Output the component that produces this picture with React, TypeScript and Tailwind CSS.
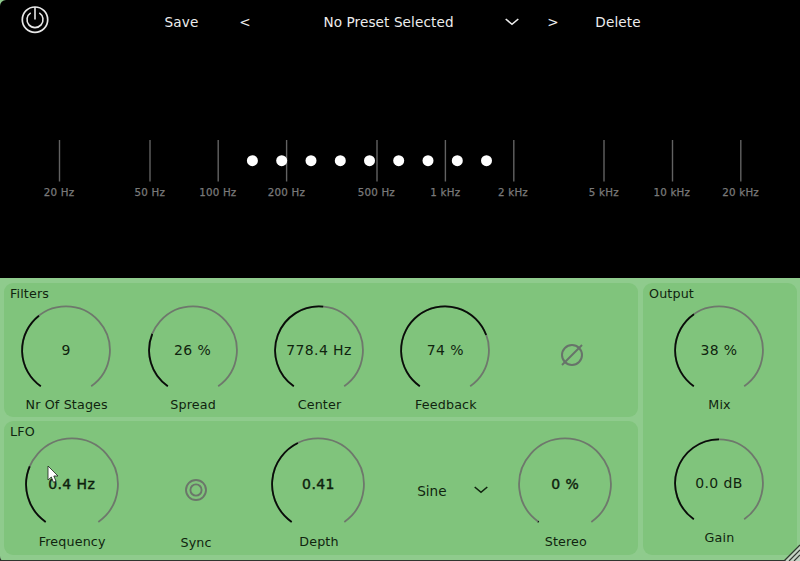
import React from "react";

const MARKS: [number, string, number][] = [
  [59.5, "20 Hz", 59],
  [150, "50 Hz", 149.8],
  [218.2, "100 Hz", 217.8],
  [286.6, "200 Hz", 286.5],
  [377, "500 Hz", 376.3],
  [445.4, "1 kHz", 445.3],
  [513.8, "2 kHz", 513],
  [604, "5 kHz", 603.8],
  [672.5, "10 kHz", 671.8],
  [740.8, "20 kHz", 740.6],
];

const STAGES = [252.4, 281.7, 311, 340.3, 369.5, 398.7, 428, 457.3, 486.5];

function point(c: number, r: number, deg: number) {
  const a = (deg * Math.PI) / 180;
  return `${(c + r * Math.sin(a)).toFixed(2)} ${(c - r * Math.cos(a)).toFixed(2)}`;
}

function arc(c: number, r: number, from: number, to: number) {
  return `M${point(c, r, from)}A${r} ${r} 0 ${to - from > 180 ? 1 : 0} 1 ${point(c, r, to)}`;
}

type KnobProps = {
  size: number;
  angle: number;
  value: string;
  label: string;
  strong?: boolean;
  labelClass?: string;
};

function Knob({ size, angle, value, label, strong, labelClass = "mt-px" }: KnobProps) {
  const c = size / 2;
  const radius = c - 2.1;
  return (
    <div className="flex w-full flex-col items-center">
      <div className="grid place-items-center">
        <svg className="col-start-1 row-start-1" width={size} height={size} fill="none" strokeWidth="1.8">
          <g transform="translate(0 0.3)">
            <path d={arc(c, radius, -145, 145)} stroke="#6e786c" />
            <path d={arc(c, radius, -145, angle)} stroke="#070f07" />
          </g>
        </svg>
        <span
          className={`col-start-1 row-start-1 text-[14px] leading-4 tracking-[0.4px] whitespace-nowrap ${
            strong ? "[-webkit-text-stroke:0.4px_#0b1c0b]" : ""
          }`}
        >
          {value}
        </span>
      </div>
      <span className={`pl-px text-[12.7px] leading-4 tracking-[0.15px] whitespace-nowrap ${labelClass}`}>{label}</span>
    </div>
  );
}

function Chevron({ className }: { className: string }) {
  return (
    <svg className={className} width="14" height="8" fill="none" stroke="currentColor" strokeWidth="1.6">
      <path d="M0.7 1L7 6.3L13.3 1" />
    </svg>
  );
}

function Title({ children }: { children: string }) {
  return <h2 className="h-[18px] pt-[3px] pl-[6px] text-[12.7px] leading-4 tracking-[0.15px]">{children}</h2>;
}

export default function App() {
  return (
    <div className="relative flex h-[561px] w-[800px] flex-col overflow-hidden bg-[#8fcb8d] font-['DejaVu_Sans',Verdana,sans-serif] text-[#10240f]">
      <header className="h-[278px] shrink-0 rounded-tl-[6px] bg-black text-[#ededed]">
        <div className="flex h-[44px] items-center text-[13.6px] tracking-[0.1px]">
          <svg className="-mt-[5px] ml-[21px]" width="28" height="28" fill="none" stroke="#e8e8e8">
            <circle cx="14" cy="13.7" r="12.7" strokeWidth="1.7" />
            <path d="M9.7 6.9A8 8 0 1 0 18.3 6.9" strokeWidth="1.6" />
            <path d="M14 1V13.5" strokeWidth="1.6" />
          </svg>
          <span className="ml-[101px] w-[63px] text-center">Save</span>
          <span className="ml-[22px] w-5 text-center">&lt;</span>
          <span className="ml-[63px] w-[141px] text-center whitespace-nowrap">No Preset Selected</span>
          <Chevron className="ml-[46px]" />
          <span className="ml-[24px] w-5 text-center">&gt;</span>
          <span className="ml-[24px] w-[62px] text-center">Delete</span>
        </div>
        <svg width="800" height="234" viewBox="0 44 800 234">
          {MARKS.map(([x, text, tx]) => (
            <g key={text}>
              <path d={`M${x} 140V181.5`} stroke="#626262" strokeWidth="1.4" />
              <text
                x={tx}
                y="196.4"
                textAnchor="middle"
                fontSize="10.3"
                letterSpacing="0.2"
                fill="#7a7a7a"
                stroke="#7a7a7a"
                strokeWidth="0.25"
              >
                {text}
              </text>
            </g>
          ))}
          {STAGES.map((x) => (
            <circle key={x} cx={x} cy="160.7" r="5.5" fill="#fff" />
          ))}
        </svg>
      </header>

      <main className="flex gap-[5px] pt-[5px] pl-1">
        <div className="flex w-[634px] flex-col gap-1">
          <section className="h-[134px] rounded-[9px] bg-[#80c47c]">
            <Title>Filters</Title>
            <div className="mt-[3px] -ml-px grid w-[632px] grid-cols-5">
              <Knob size={92} angle={-38} value="9" label="Nr Of Stages" />
              <Knob size={92} angle={-68} value="26 %" label="Spread" />
              <Knob size={92} angle={5.5} value="778.4 Hz" label="Center" />
              <Knob size={92} angle={69.6} value="74 %" label="Feedback" />
              <div className="flex justify-center pt-[39px]">
                <svg width="24" height="24" fill="none" stroke="#67736a" strokeWidth="2">
                  <circle cx="12" cy="12" r="10" />
                  <path d="M2 22L22 2" />
                </svg>
              </div>
            </div>
          </section>

          <section className="h-[134px] rounded-[9px] bg-[#80c47c]">
            <Title>LFO</Title>
            <div className="-mt-[3px] ml-[6px] grid w-[617px] grid-cols-5">
              <Knob size={96} angle={-67} value="0.4 Hz" label="Frequency" strong labelClass="mt-[2px]" />
              <div className="flex flex-col items-center pt-[42px] pl-[2px]">
                <svg width="24" height="24" fill="none" stroke="#6b766a" strokeWidth="1.9">
                  <circle cx="12" cy="12" r="10" />
                  <circle cx="12" cy="12" r="5.6" />
                </svg>
                <span className="mt-[33px] text-[12.7px] leading-4 tracking-[0.15px]">Sync</span>
              </div>
              <Knob size={96} angle={-26} value="0.41" label="Depth" strong labelClass="mt-[2px]" />
              <div className="flex items-start pt-[47px] pl-[37px]">
                <span className="w-[57px] shrink-0 text-[13.6px] leading-4">Sine</span>
                <Chevron className="mt-[3px] shrink-0" />
              </div>
              <Knob size={96} angle={-144} value="0 %" label="Stereo" strong labelClass="mt-[2px]" />
            </div>
          </section>
        </div>

        <section className="h-[272px] w-[154px] rounded-[9px] bg-[#80c47c]">
          <Title>Output</Title>
          <div className="mt-[3px] flex w-[152px] flex-col gap-[24px]">
            <Knob size={92} angle={-34.8} value="38 %" label="Mix" />
            <Knob size={92} angle={0} value="0.0 dB" label="Gain" />
          </div>
        </section>
      </main>

      <div className="mt-auto h-px bg-[#303630]" />

      <svg className="absolute top-[465px] left-[47px]" width="14" height="20">
        <path d="M1 1V15L4.3 12L6.5 17.3L9 16.2L6.8 11H11Z" fill="#fff" stroke="#1a221a" strokeWidth="0.8" />
      </svg>
      <svg className="absolute right-0 bottom-0" width="18" height="18" fill="none">
        <path d="M18 3V18H3Z" fill="#c5d1c4" />
        <path d="M2 18L18 2M7 18L18 7M12 18L18 12" stroke="#303630" strokeWidth="1.2" />
      </svg>
      <svg className="absolute bottom-0 left-0" width="5" height="5">
        <path d="M0 0Q0 5 5 5H0Z" fill="#303630" />
      </svg>
    </div>
  );
}
